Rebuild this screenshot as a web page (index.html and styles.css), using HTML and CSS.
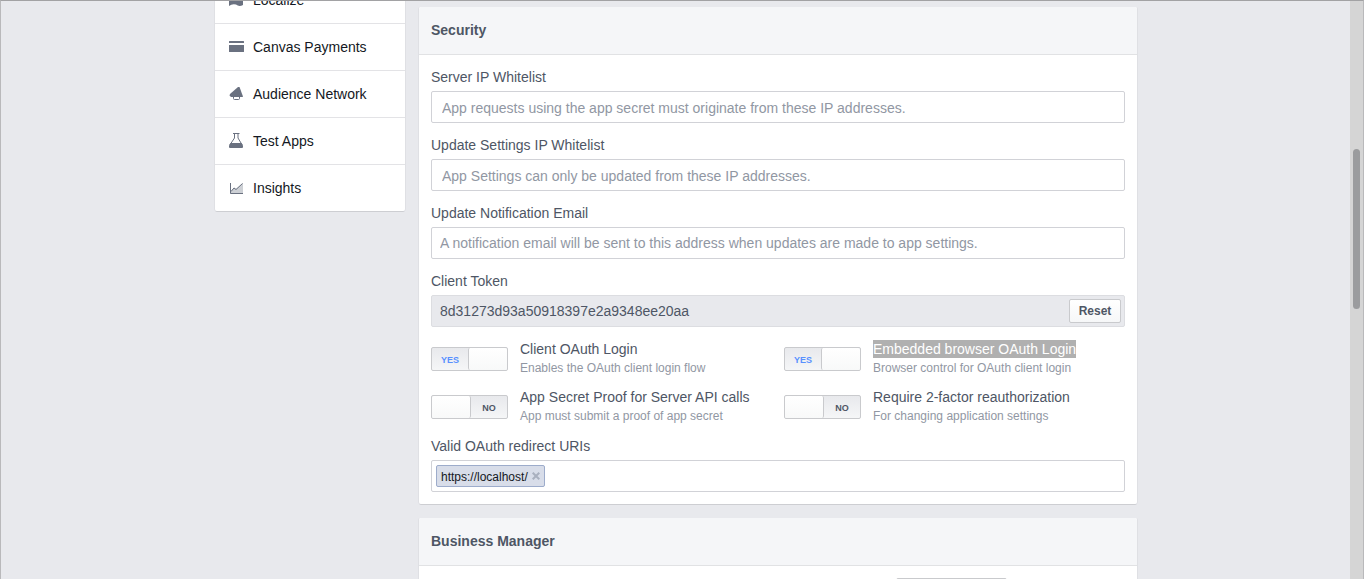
FILE: index.html
```html
<!DOCTYPE html>
<html lang="en">
<head>
<meta charset="utf-8">
<title>App Settings</title>
<link rel="stylesheet" href="styles.css">
</head>
<body>
<div class="window">
  <div class="viewport">
    <div class="columns">
      <nav class="sidebar">
        <a class="nav-item" href="#"><svg class="icon" viewBox="0 0 16 16"><path d="M1 3Q4 1 8 3T15 3V13Q11 15 8 12.500Q4 11.500 1 14Z"/></svg>Localize</a>
        <a class="nav-item" href="#"><svg class="icon" viewBox="0 0 16 16"><path d="M1 4V2.500Q1 2 1.500 2H15.500Q16 2 16 2.500V4ZM1 6H16V12.500Q16 13 15.500 13H1.500Q1 13 1 12.500Z"/></svg>Canvas Payments</a>
        <a class="nav-item" href="#"><svg class="icon" viewBox="0 0 16 16"><path d="M10 1H11.500L15 10.500L14.500 11H3L1.500 9.500L2 8Z"/><path class="stroke" d="M5.500 10.500V12.500Q5.500 13.500 6.500 13.500H10.500Q11.500 13.500 11.500 12.500V10.500"/></svg>Audience Network</a>
        <a class="nav-item" href="#"><svg class="icon" viewBox="0 0 16 16"><path class="stroke" d="M5 .5H11.500M6.500 .5V5L1.800 12M10 .5V5L14.200 12"/><path d="M2.500 10H13.500L15 12.500V14Q15 15 14 15H2Q1 15 1 14V12.500Z"/></svg>Test Apps</a>
        <a class="nav-item" href="#"><svg class="icon" viewBox="0 0 16 16"><path class="tint" d="M2 12L6 7.500L8 9L15 3V13.500H2Z"/><path class="stroke" d="M2.500 3V13.500H15M3 11.500L6 8L8 9.500L14.500 3.500"/></svg>Insights</a>
      </nav>
      <main class="content">
        <section class="card">
          <h2 class="card-title">Security</h2>
          <form class="card-body">
            <div class="field">
              <label for="server-ip">Server IP Whitelist</label>
              <input class="box tokens" id="server-ip" type="text" placeholder="App requests using the app secret must originate from these IP addresses.">
            </div>
            <div class="field">
              <label for="update-ip">Update Settings IP Whitelist</label>
              <input class="box tokens" id="update-ip" type="text" placeholder="App Settings can only be updated from these IP addresses.">
            </div>
            <div class="field">
              <label for="email">Update Notification Email</label>
              <input class="box" id="email" type="email" placeholder="A notification email will be sent to this address when updates are made to app settings.">
            </div>
            <div class="field">
              <label for="token">Client Token</label>
              <div class="box locked">
                <input class="bare" id="token" type="text" value="8d31273d93a50918397e2a9348ee20aa" readonly>
                <button class="reset" type="button">Reset</button>
              </div>
            </div>
            <div class="options">
              <label class="option">
                <span class="switch on"><input type="checkbox" checked><span class="state">YES</span><span class="knob"></span></span>
                <span class="option-text"><span class="option-name">Client OAuth Login</span><span class="option-note">Enables the OAuth client login flow</span></span>
              </label>
              <label class="option">
                <span class="switch on"><input type="checkbox" checked><span class="state">YES</span><span class="knob"></span></span>
                <span class="option-text"><span class="option-name selected">Embedded browser OAuth Login</span><span class="option-note">Browser control for OAuth client login</span></span>
              </label>
              <label class="option">
                <span class="switch"><input type="checkbox"><span class="knob"></span><span class="state">NO</span></span>
                <span class="option-text"><span class="option-name">App Secret Proof for Server API calls</span><span class="option-note">App must submit a proof of app secret</span></span>
              </label>
              <label class="option">
                <span class="switch"><input type="checkbox"><span class="knob"></span><span class="state">NO</span></span>
                <span class="option-text"><span class="option-name">Require 2-factor reauthorization</span><span class="option-note">For changing application settings</span></span>
              </label>
            </div>
            <div class="field">
              <label for="redirect">Valid OAuth redirect URIs</label>
              <div class="box token-box">
                <span class="token">https://localhost/<button class="remove" type="button" aria-label="Remove"><svg viewBox="0 0 8 8"><path d="M.7 .7L7.300 7.300M7.300 .7L.7 7.300"/></svg></button></span>
                <input class="bare" id="redirect" type="text">
              </div>
            </div>
          </form>
        </section>
        <section class="card">
          <h2 class="card-title">Business Manager</h2>
          <div class="card-body centered">
            <button class="wide" type="button" aria-label="Business"></button>
          </div>
        </section>
      </main>
    </div>
  </div>
  <div class="scrollbar"><div class="thumb"></div></div>
</div>
</body>
</html>
```
FILE: styles.css
```css
* { box-sizing: border-box; }

body {
  margin: 0;
  background: #fff;
  color: #4e5665;
  font: 14px/18px "Liberation Sans", Arial, sans-serif;
}

input, button { font: inherit; color: inherit; }

.window {
  display: flex;
  height: calc(100vh - 1px);
  overflow: hidden;
  border: 1px solid #b9b9bb;
  border-top-color: #a2a2a4;
  border-bottom: 0;
  background: #e8e9ed;
}

.viewport { flex: 1; min-width: 0; overflow: hidden; }

.columns {
  display: flex;
  align-items: flex-start;
  gap: 14px;
  width: 923px;
  max-width: 100%;
  margin: 0 auto;
  padding-left: 1px;
}

.sidebar {
  width: 190px;
  margin-top: -24px;
  background: #fff;
  border-radius: 2px;
  box-shadow: 1px 0 #dfe0e4, -1px 0 #dfe0e4, 0 1px #cdced2;
}

.nav-item {
  display: flex;
  align-items: center;
  gap: 9px;
  height: 47px;
  padding-left: 13px;
  border-bottom: 1px solid #e3e3e6;
  color: #141823;
  text-decoration: none;
}

.nav-item:last-child { height: 46px; border-bottom: 0; }

.icon { width: 16px; height: 16px; fill: #6a7180; }
.icon .stroke { fill: none; stroke: #6a7180; }
.icon .tint { fill: #cdd0d5; }

.content {
  flex: 1;
  min-width: 0;
  display: grid;
  gap: 14px;
  margin-top: 6px;
}

.card {
  background: #fff;
  border-radius: 2px;
  box-shadow: 1px 0 #dfe0e4, -1px 0 #dfe0e4, 0 1px #cdced2;
}

.card-title {
  margin: 0;
  padding: 14px 12px 15px;
  border-bottom: 1px solid #e1e2e4;
  border-radius: 2px 2px 0 0;
  background: #f5f6f8;
  font-size: 14px;
  line-height: 18px;
}

.card-body {
  display: flex;
  flex-direction: column;
  gap: 13px;
  padding: 13px 12px 12px;
}

.field { display: flex; flex-direction: column; gap: 5px; }

.box {
  width: 100%;
  height: 32px;
  padding: 0 8px;
  border: 1px solid #d1d2d7;
  border-radius: 2px;
  background: #fff;
}

.tokens { padding: 2px 10px 0; }
.box::placeholder { color: #9197a3; opacity: 1; }

.locked {
  display: flex;
  align-items: center;
  padding: 0 3px 0 8px;
  border-color: #dcdde1;
  background: #e8e9ed;
}

.bare {
  flex: 1;
  min-width: 0;
  padding: 0;
  border: 0;
  outline: 0;
  background: none;
}

.reset {
  width: 52px;
  height: 24px;
  padding: 0;
  border: 1px solid #c9cacd;
  border-radius: 2px;
  background: linear-gradient(#fff, #f6f7f8);
  font-size: 12px;
  font-weight: bold;
}

.options {
  display: grid;
  grid-template-columns: 1fr 1fr;
  gap: 10px 12px;
}

.option { display: flex; align-items: center; gap: 12px; height: 38px; }

.switch {
  position: relative;
  display: flex;
  width: 77px;
  height: 24px;
  border: 1px solid #c9cacd;
  border-radius: 2px;
  background: linear-gradient(#e8e9ec, #f5f6f7);
}

.switch input {
  position: absolute;
  inset: 0;
  width: 100%;
  height: 100%;
  margin: 0;
  opacity: 0;
}

.knob {
  width: 39px;
  border-right: 1px solid #c9cacd;
  border-radius: 2px;
  background: linear-gradient(#fff, #f8f9f9);
}

.on .knob { border-right: 0; border-left: 1px solid #c9cacd; }

.state {
  flex: 1;
  padding-top: 2px;
  font-size: 9px;
  line-height: 20px;
  font-weight: bold;
  text-align: center;
}

.on .state { color: #5890ff; }

.option-text {
  display: flex;
  flex-direction: column;
  align-items: flex-start;
  gap: 2px;
  height: 38px;
}

.option-note { color: #9197a3; font-size: 12px; line-height: 16px; }
.selected { background: #b0b0b0; color: #fff; }

.options + .field { margin-top: -2px; }

.token-box { display: flex; align-items: center; padding: 0 4px; }

.token {
  display: flex;
  align-items: center;
  gap: 4px;
  height: 22px;
  padding: 1px 4px 0;
  border: 1px solid #9daccb;
  border-radius: 2px;
  background: #d8dde9;
  color: #141823;
  font-size: 12px;
}

.remove {
  display: flex;
  padding: 0 0 2px;
  border: 0;
  background: none;
}

.remove svg { width: 8px; height: 8px; stroke: #a9b0bf; stroke-width: 2; }

.centered { align-items: center; padding-top: 12px; }

.wide {
  width: 111px;
  height: 24px;
  margin-left: 347px;
  border: 1px solid #c9cacd;
  border-radius: 2px;
  background: linear-gradient(#fff, #f6f7f8);
}

.scrollbar { width: 13px; background: #d5d5d5; }

.thumb {
  width: 7px;
  height: 160px;
  margin: 148px auto 0;
  border-radius: 4px;
  background: #9b9c9e;
}
```
